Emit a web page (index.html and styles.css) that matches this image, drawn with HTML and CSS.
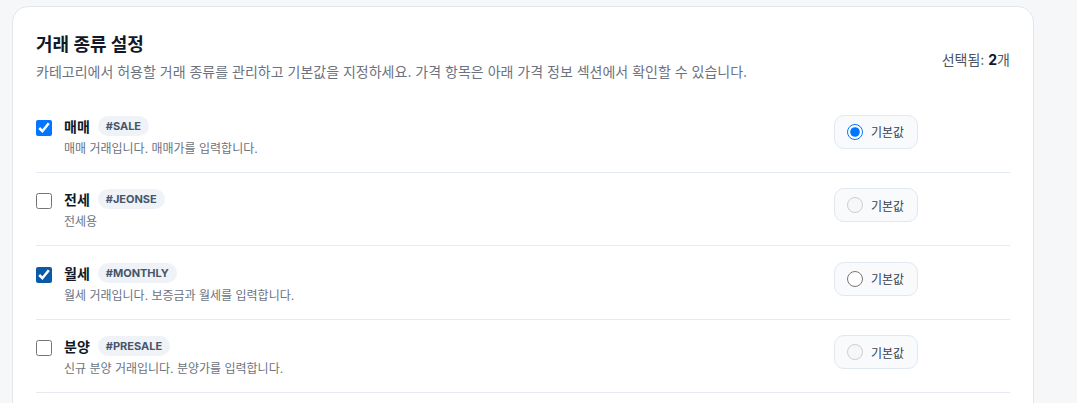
FILE: index.html
```html
<!DOCTYPE html>
<html lang="ko">
<head>
<meta charset="utf-8">
<title>거래 종류 설정</title>
<link rel="stylesheet" href="styles.css">
</head>
<body>
<section class="card">
  <header class="card-head">
    <div class="head-text">
      <h2 class="title">거래 종류 설정</h2>
      <p class="subtitle">카테고리에서 허용할 거래 종류를 관리하고 기본값을 지정하세요. 가격 항목은 아래 가격 정보 섹션에서 확인할 수 있습니다.</p>
    </div>
    <div class="count">선택됨: <b>2</b>개</div>
  </header>
  <ul class="list">
    <li class="row">
      <input type="checkbox" class="check" checked>
      <div class="info">
        <div class="name-line"><span class="name">매매</span><span class="tag">#SALE</span></div>
        <p class="desc">매매 거래입니다. 매매가를 입력합니다.</p>
      </div>
      <div class="side">
        <label class="default-pill"><input type="radio" name="def" class="radio" checked><span>기본값</span></label>
      </div>
    </li>
    <li class="row">
      <input type="checkbox" class="check">
      <div class="info">
        <div class="name-line"><span class="name">전세</span><span class="tag">#JEONSE</span></div>
        <p class="desc">전세용</p>
      </div>
      <div class="side">
        <label class="default-pill"><input type="radio" name="def" class="radio" disabled><span>기본값</span></label>
      </div>
    </li>
    <li class="row">
      <input type="checkbox" class="check check-dark" checked>
      <div class="info">
        <div class="name-line"><span class="name">월세</span><span class="tag">#MONTHLY</span></div>
        <p class="desc">월세 거래입니다. 보증금과 월세를 입력합니다.</p>
      </div>
      <div class="side">
        <label class="default-pill"><input type="radio" name="def" class="radio"><span>기본값</span></label>
      </div>
    </li>
    <li class="row">
      <input type="checkbox" class="check">
      <div class="info">
        <div class="name-line"><span class="name">분양</span><span class="tag">#PRESALE</span></div>
        <p class="desc">신규 분양 거래입니다. 분양가를 입력합니다.</p>
      </div>
      <div class="side">
        <label class="default-pill"><input type="radio" name="def" class="radio" disabled><span>기본값</span></label>
      </div>
    </li>
  </ul>
</section>
</body>
</html>
```

FILE: styles.css
```css
* { box-sizing: border-box; }
html, body { margin: 0; }
body {
  background: #f6f7f9;
  padding: 6px 0 0 12px;
  font-family: Inter, "Noto Sans CJK KR", "Noto Sans", sans-serif;
  color: #111827;
}
.card {
  width: 1022px;
  background: #fff;
  border: 1px solid #e3e7ed;
  border-radius: 16px;
  padding: 25px 23px 0 23px;
  min-height: 420px;
}
.card-head {
  display: flex;
  align-items: center;
  justify-content: space-between;
  margin-bottom: 17px;
}
.title {
  margin: 0;
  font-size: 18px;
  line-height: 26px;
  font-weight: 700;
  color: #111827;
}
.subtitle {
  margin: 4px 0 0;
  font-size: 14px;
  line-height: 20px;
  color: #6b7280;
}
.count {
  font-size: 14px;
  color: #4b5563;
  margin-top: 4px;
}
.count b { color: #111827; font-weight: 700; }
.list { list-style: none; margin: 0; padding: 0; }
.row {
  display: flex;
  align-items: flex-start;
  padding: 16.5px 0 14px;
  border-bottom: 1px solid #e5e9f0;
}
.check {
  width: 16px;
  height: 16px;
  margin: 4px 12px 0 0;
  flex: none;
}
.check-dark { accent-color: #0b5aa8; }
.info { flex: 1; min-width: 0; }
.name-line {
  display: flex;
  align-items: center;
  gap: 8px;
  height: 20px;
}
.name {
  font-size: 14px;
  font-weight: 700;
  color: #111827;
}
.tag {
  display: inline-flex;
  align-items: center;
  height: 20px;
  padding: 0 8px;
  border-radius: 10px;
  background: #eff3f8;
  color: #475569;
  font-size: 11px;
  font-weight: 700;
}
.desc {
  margin: 4px 0 0;
  font-size: 12px;
  line-height: 18px;
  color: #6b7280;
}
.side {
  width: 176px;
  flex: none;
  display: flex;
}
.default-pill {
  display: inline-flex;
  align-items: center;
  gap: 8px;
  height: 34px;
  padding: 0 13px 0 12px;
  border: 1px solid #e2e8f0;
  border-radius: 10px;
  background: #f8fafc;
  font-size: 12px;
  color: #374151;
  margin-top: -1px;
  margin-bottom: -2px;
}
.radio {
  width: 16px;
  height: 16px;
  margin: 0;
}
```
